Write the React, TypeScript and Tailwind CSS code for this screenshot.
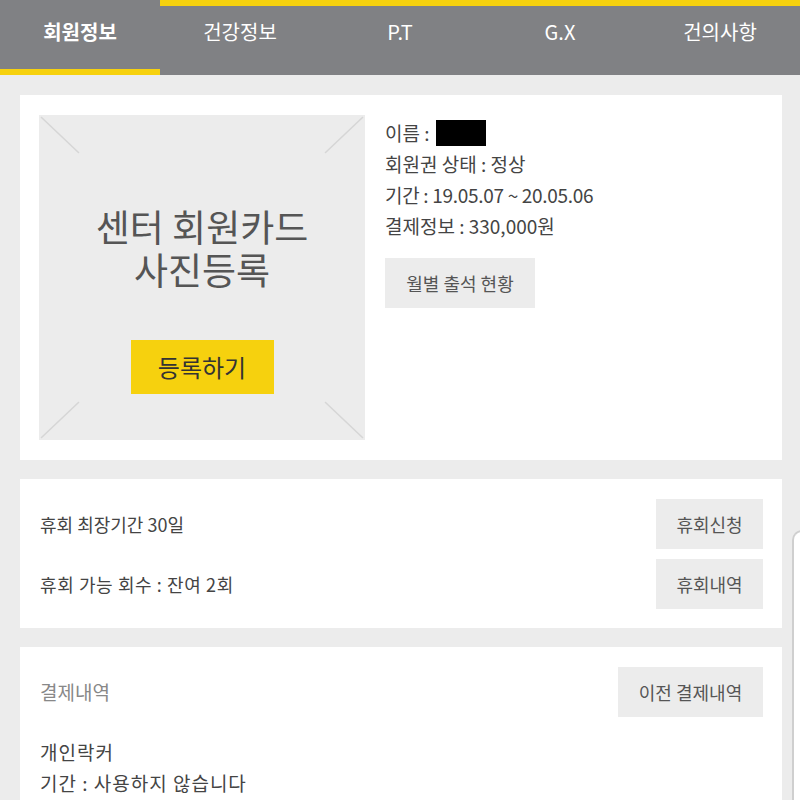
const tabs = ['회원정보', '건강정보', 'P.T', 'G.X', '건의사항'];

function GrayButton({ children, className = '' }: { children: React.ReactNode; className?: string }) {
  return (
    <button className={`h-[50px] bg-[#ececec] text-[#555] text-[18px] px-5 ${className}`}>
      {children}
    </button>
  );
}

function PhotoBox() {
  return (
    <div className="relative w-[326px] h-[325px] shrink-0 bg-[#ececec] flex flex-col items-center">
      <svg className="absolute inset-0" width="326" height="325" viewBox="0 0 326 325">
        <g stroke="#d6d6d6" strokeWidth="1.5">
          <line x1="2" y1="2" x2="40" y2="38" />
          <line x1="324" y1="2" x2="286" y2="38" />
          <line x1="2" y1="323" x2="40" y2="287" />
          <line x1="324" y1="323" x2="286" y2="287" />
        </g>
      </svg>
      <div className="relative mt-[90px] flex flex-col items-center text-[37px] text-[#555]">
        <div className="h-[43px] leading-[43px]">센터 회원카드</div>
        <div className="h-[43px] leading-[43px]">사진등록</div>
      </div>
      <button className="relative mt-[49px] w-[143px] h-[54px] bg-[#f6d10e] text-[24px] text-[#333]">
        등록하기
      </button>
    </div>
  );
}

export default function App() {
  return (
    <div
      className="relative w-[800px] h-[800px] overflow-hidden bg-[#ececec]"
      style={{ fontFamily: '"Noto Sans CJK KR", "Noto Sans", sans-serif' }}
    >
      {/* top nav */}
      <div className="relative h-[75px] bg-[#808184] flex">
        <div className="absolute top-0 left-[160px] right-0 h-[6px] bg-[#f6d10e]" />
        {tabs.map((t, i) => (
          <div
            key={t}
            className={`relative w-[160px] flex items-center justify-center pb-[12px] text-[20px] text-white ${
              i === 0 ? 'font-bold' : ''
            }`}
          >
            {t}
            {i === 0 && <div className="absolute bottom-0 left-0 right-0 h-[6px] bg-[#f6d10e]" />}
          </div>
        ))}
      </div>

      <div className="flex flex-col gap-[19px] pt-[20px] pl-[20px] w-[782px]">
        {/* member card */}
        <div className="bg-white h-[365px] pt-[20px] pl-[19px] flex gap-[20px]">
          <PhotoBox />
          <div className="pt-[2px]">
            <div className="text-[19px] leading-[31px] text-[#444]">
              <div className="flex items-center">
                이름 :
                <span className="inline-block ml-[6px] w-[50px] h-[26px] bg-black" />
              </div>
              <div>회원권 상태 : 정상</div>
              <div className="tracking-[-0.3px]">기간 : 19.05.07 ~ 20.05.06</div>
              <div>결제정보 : 330,000원</div>
            </div>
            <GrayButton className="mt-[17px] w-[150px] text-[17px]">월별 출석 현황</GrayButton>
          </div>
        </div>

        {/* pause card */}
        <div className="bg-white h-[149px] py-[20px] pl-[20px] pr-[19px] flex flex-col gap-[10px]">
          <div className="flex items-center justify-between">
            <span className="text-[18px] text-[#444]">휴회 최장기간 30일</span>
            <GrayButton className="w-[107px] px-0">휴회신청</GrayButton>
          </div>
          <div className="flex items-center justify-between">
            <span className="text-[18px] text-[#444] tracking-[0.6px]">휴회 가능 회수 :  잔여 2회</span>
            <GrayButton className="w-[107px] px-0">휴회내역</GrayButton>
          </div>
        </div>

        {/* payment card */}
        <div className="bg-white h-[200px] pt-[20px] pl-[20px] pr-[19px]">
          <div className="flex items-center justify-between">
            <span className="text-[19px] text-[#888]">결제내역</span>
            <GrayButton className="w-[145px] px-0">이전 결제내역</GrayButton>
          </div>
          <div className="mt-[19px] text-[19px] leading-[31px] text-[#444] tracking-[1px]">
            <div>개인락커</div>
            <div>기간 : 사용하지 않습니다</div>
          </div>
        </div>
      </div>

      {/* overlapping panel edge on the right */}
      <div className="absolute left-[792px] top-[530px] w-[40px] h-[300px] rounded-tl-[10px] border-l-2 border-t-2 border-[#cfcfcf] bg-white" />
    </div>
  );
}
